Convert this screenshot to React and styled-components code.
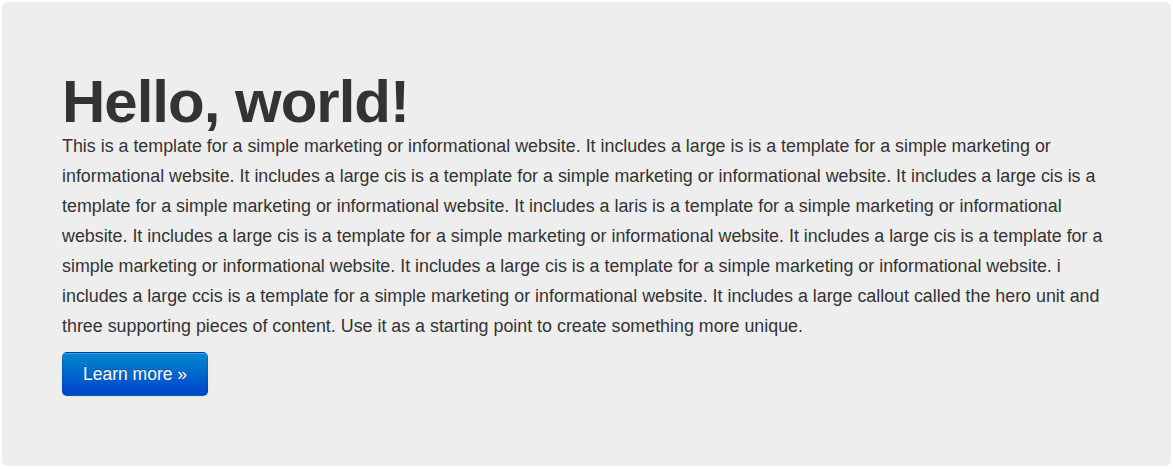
import React from "react";
import styled, { createGlobalStyle } from "styled-components";

const GlobalStyle = createGlobalStyle`
  html, body { margin: 0; padding: 0; background: #ffffff; }
  body { font-family: "Liberation Sans", Arial, sans-serif; color: #333333; }
`;

const Page = styled.div`
  padding: 2px;
`;

const Hero = styled.section`
  background: #eeeeee;
  border-radius: 6px;
  padding: 60px 60px 70px;
`;

const Title = styled.h1`
  margin: 10px 0 0;
  font-size: 60px;
  line-height: 60px;
  font-weight: bold;
  letter-spacing: -1px;
  color: #333333;
`;

const Lead = styled.p`
  margin: -1px 0 0;
  font-size: 17.85px;
  line-height: 30px;
  color: #333333;
`;

const Button = styled.a`
  display: inline-block;
  margin-top: 11px;
  padding: 11px 20px;
  font-size: 17.5px;
  line-height: 20px;
  color: #ffffff;
  text-decoration: none;
  border-radius: 5px;
  border: 1px solid #0044aa;
  border-color: rgba(0, 0, 0, 0.1) rgba(0, 0, 0, 0.1) rgba(0, 0, 0, 0.25);
  background-color: #006dcc;
  background-image: linear-gradient(to bottom, #0088cc, #0044cc);
  box-shadow: inset 0 1px 0 rgba(255, 255, 255, 0.2), 0 1px 2px rgba(0, 0, 0, 0.05);
  text-shadow: 0 -1px 0 rgba(0, 0, 0, 0.25);
  cursor: pointer;
`;

export default function App() {
  return (
    <>
      <GlobalStyle />
      <Page>
        <Hero>
          <Title>Hello, world!</Title>
          <Lead>
            This is a template for a simple marketing or informational website. It includes a large is is a template for a simple marketing or informational website. It includes a large cis is a template for a simple marketing or informational website. It includes a large cis is a template for a simple marketing or informational website. It includes a laris is a template for a simple marketing or informational website. It includes a large cis is a template for a simple marketing or informational website. It includes a large cis is a template for a simple marketing or informational website. It includes a large cis is a template for a simple marketing or informational website. i includes a large ccis is a template for a simple marketing or informational website. It includes a large callout called the hero unit and three supporting pieces of content. Use it as a starting point to create something more unique.
          </Lead>
          <Button href="#">Learn more »</Button>
        </Hero>
      </Page>
    </>
  );
}
